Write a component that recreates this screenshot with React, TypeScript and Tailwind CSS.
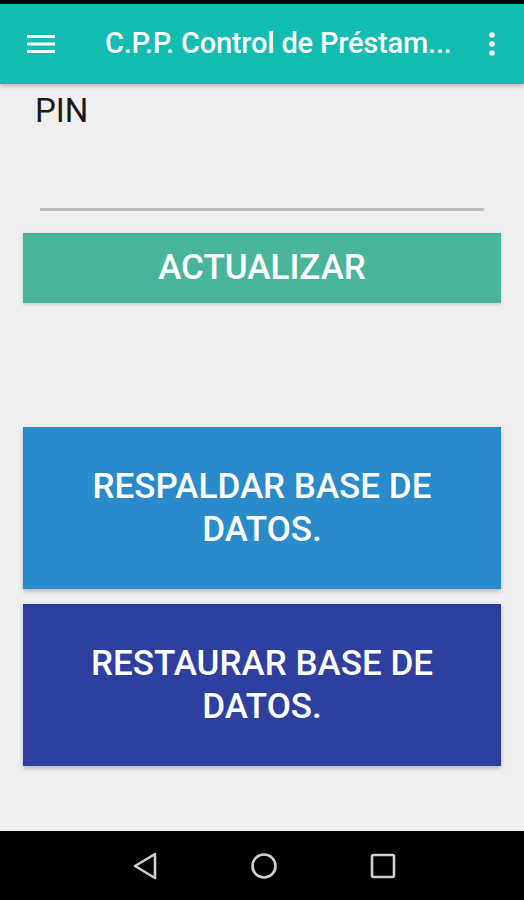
import * as React from 'react';

function MenuIcon(): React.ReactElement {
  return (
    <svg width="28" height="20" viewBox="0 0 28 20" className="text-white">
      <rect x="0" y="1" width="28" height="3" fill="currentColor" />
      <rect x="0" y="8.5" width="28" height="3" fill="currentColor" />
      <rect x="0" y="16" width="28" height="3" fill="currentColor" />
    </svg>
  );
}

function MoreIcon(): React.ReactElement {
  return (
    <svg width="8" height="24" viewBox="0 0 8 24" className="text-white">
      <circle cx="4" cy="3" r="2.8" fill="currentColor" />
      <circle cx="4" cy="12" r="2.8" fill="currentColor" />
      <circle cx="4" cy="21" r="2.8" fill="currentColor" />
    </svg>
  );
}

function NavBar(): React.ReactElement {
  return (
    <div className="h-[69px] bg-black flex items-center justify-center gap-[92px] pl-[4px]">
      <svg width="26" height="30" viewBox="0 0 26 30">
        <path d="M23 3 L3 15 L23 27 Z" fill="none" stroke="#cfcfcf" strokeWidth="2.6" strokeLinejoin="round" />
      </svg>
      <svg width="28" height="28" viewBox="0 0 28 28">
        <circle cx="14" cy="14" r="11.5" fill="none" stroke="#cfcfcf" strokeWidth="2.6" />
      </svg>
      <svg width="26" height="26" viewBox="0 0 26 26">
        <rect x="2" y="2" width="22" height="22" rx="1.5" fill="none" stroke="#cfcfcf" strokeWidth="2.6" />
      </svg>
    </div>
  );
}

export default function App(): React.ReactElement {
  const buttons = [
    { label: 'RESPALDAR BASE DE DATOS.', color: 'bg-[#2a8bcb]' },
    { label: 'RESTAURAR BASE DE DATOS.', color: 'bg-[#2f3f9e]' }
  ];

  return (
    <div className="w-[524px] h-[900px] flex flex-col bg-[#efefef]" style={{ fontFamily: 'Roboto, "Noto Sans", sans-serif' }}>
      <div className="h-[4px] bg-black" />
      <header className="h-[80px] bg-[#13bcb0] flex items-center pl-[27px] pr-[28px] shadow-[0_2px_4px_rgba(0,0,0,0.25)] z-10">
        <MenuIcon />
        <h1 className="ml-[50px] flex-1 text-white text-[29px] font-medium tracking-[-0.2px] whitespace-nowrap">
          C.P.P. Control de Préstam...
        </h1>
        <MoreIcon />
      </header>

      <main className="flex-1 flex flex-col">
        <div className="px-[35px] pt-[7px] text-[33px] text-[#1a1a1a] leading-[40px]">PIN</div>
        <div className="mx-[40px] mt-[77px] h-[3px] bg-[#bdbdbd]" />
        <button className="mx-[23px] mt-[22px] h-[70px] bg-[#49b59a] text-white text-[35px] font-medium shadow-[0_1px_3px_rgba(0,0,0,0.2)]">
          ACTUALIZAR
        </button>

        <div className="mt-[124px] flex flex-col gap-[15px] mx-[23px]">
          {buttons.map(b => (
            <button
              key={b.label}
              className={`${b.color} h-[162px] text-white text-[35px] font-medium leading-[43px] px-[50px] shadow-[0_2px_4px_rgba(0,0,0,0.25)]`}
            >
              {b.label}
            </button>
          ))}
        </div>
      </main>

      <NavBar />
    </div>
  );
}
